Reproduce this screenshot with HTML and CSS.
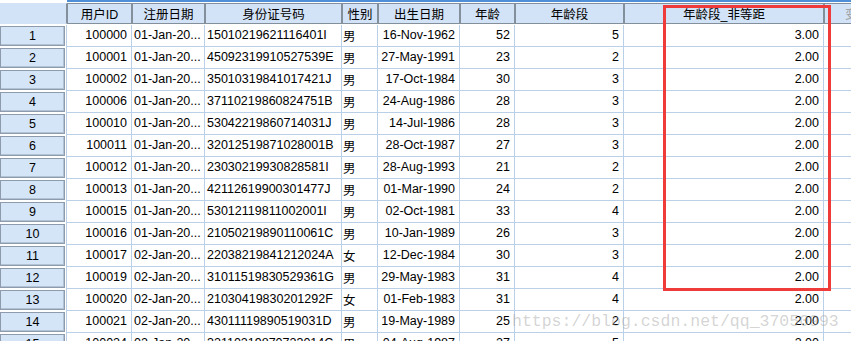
FILE: index.html
```html
<!DOCTYPE html>
<html lang="zh-CN">
<head>
  <meta charset="UTF-8">
  <title>数据视图</title>
  <link rel="stylesheet" href="styles.css">
</head>
<body>
  <div class="sheet">
    <table class="grid">
      <colgroup>
        <col class="w-rowhead">
        <col class="w-id">
        <col class="w-reg">
        <col class="w-card">
        <col class="w-sex">
        <col class="w-birth">
        <col class="w-age">
        <col class="w-band">
        <col class="w-band2">
        <col class="w-empty">
      </colgroup>
      <thead>
        <tr>
          <th class="corner"><div class="hc"></div></th>
          <th><div class="hc">用户ID</div></th>
          <th><div class="hc">注册日期</div></th>
          <th><div class="hc">身份证号码</div></th>
          <th><div class="hc">性别</div></th>
          <th><div class="hc">出生日期</div></th>
          <th><div class="hc">年龄</div></th>
          <th><div class="hc">年龄段</div></th>
          <th><div class="hc">年龄段_非等距</div></th>
          <th><div class="hc empty">变量</div></th>
        </tr>
      </thead>
      <tbody>
        <tr>
          <td class="rowhead"><div class="rh">1</div></td>
          <td class="num">100000</td><td class="txt">01-Jan-20...</td><td class="txt">15010219621116401I</td><td class="txt cjk">男</td>
          <td class="num">16-Nov-1962</td><td class="num">52</td><td class="num">5</td><td class="num">3.00</td><td></td>
        </tr>
        <tr>
          <td class="rowhead"><div class="rh">2</div></td>
          <td class="num">100001</td><td class="txt">01-Jan-20...</td><td class="txt">45092319910527539E</td><td class="txt cjk">男</td>
          <td class="num">27-May-1991</td><td class="num">23</td><td class="num">2</td><td class="num">2.00</td><td></td>
        </tr>
        <tr>
          <td class="rowhead"><div class="rh">3</div></td>
          <td class="num">100002</td><td class="txt">01-Jan-20...</td><td class="txt">35010319841017421J</td><td class="txt cjk">男</td>
          <td class="num">17-Oct-1984</td><td class="num">30</td><td class="num">3</td><td class="num">2.00</td><td></td>
        </tr>
        <tr>
          <td class="rowhead"><div class="rh">4</div></td>
          <td class="num">100006</td><td class="txt">01-Jan-20...</td><td class="txt">37110219860824751B</td><td class="txt cjk">男</td>
          <td class="num">24-Aug-1986</td><td class="num">28</td><td class="num">3</td><td class="num">2.00</td><td></td>
        </tr>
        <tr>
          <td class="rowhead"><div class="rh">5</div></td>
          <td class="num">100010</td><td class="txt">01-Jan-20...</td><td class="txt">53042219860714031J</td><td class="txt cjk">男</td>
          <td class="num">14-Jul-1986</td><td class="num">28</td><td class="num">3</td><td class="num">2.00</td><td></td>
        </tr>
        <tr>
          <td class="rowhead"><div class="rh">6</div></td>
          <td class="num">100011</td><td class="txt">01-Jan-20...</td><td class="txt">32012519871028001B</td><td class="txt cjk">男</td>
          <td class="num">28-Oct-1987</td><td class="num">27</td><td class="num">3</td><td class="num">2.00</td><td></td>
        </tr>
        <tr>
          <td class="rowhead"><div class="rh">7</div></td>
          <td class="num">100012</td><td class="txt">01-Jan-20...</td><td class="txt">23030219930828581I</td><td class="txt cjk">男</td>
          <td class="num">28-Aug-1993</td><td class="num">21</td><td class="num">2</td><td class="num">2.00</td><td></td>
        </tr>
        <tr>
          <td class="rowhead"><div class="rh">8</div></td>
          <td class="num">100013</td><td class="txt">01-Jan-20...</td><td class="txt">42112619900301477J</td><td class="txt cjk">男</td>
          <td class="num">01-Mar-1990</td><td class="num">24</td><td class="num">2</td><td class="num">2.00</td><td></td>
        </tr>
        <tr>
          <td class="rowhead"><div class="rh">9</div></td>
          <td class="num">100015</td><td class="txt">01-Jan-20...</td><td class="txt">53012119811002001I</td><td class="txt cjk">男</td>
          <td class="num">02-Oct-1981</td><td class="num">33</td><td class="num">4</td><td class="num">2.00</td><td></td>
        </tr>
        <tr>
          <td class="rowhead"><div class="rh">10</div></td>
          <td class="num">100016</td><td class="txt">01-Jan-20...</td><td class="txt">21050219890110061C</td><td class="txt cjk">男</td>
          <td class="num">10-Jan-1989</td><td class="num">26</td><td class="num">3</td><td class="num">2.00</td><td></td>
        </tr>
        <tr>
          <td class="rowhead"><div class="rh">11</div></td>
          <td class="num">100017</td><td class="txt">02-Jan-20...</td><td class="txt">22038219841212024A</td><td class="txt cjk">女</td>
          <td class="num">12-Dec-1984</td><td class="num">30</td><td class="num">3</td><td class="num">2.00</td><td></td>
        </tr>
        <tr>
          <td class="rowhead"><div class="rh">12</div></td>
          <td class="num">100019</td><td class="txt">02-Jan-20...</td><td class="txt">31011519830529361G</td><td class="txt cjk">男</td>
          <td class="num">29-May-1983</td><td class="num">31</td><td class="num">4</td><td class="num">2.00</td><td></td>
        </tr>
        <tr>
          <td class="rowhead"><div class="rh">13</div></td>
          <td class="num">100020</td><td class="txt">02-Jan-20...</td><td class="txt">21030419830201292F</td><td class="txt cjk">女</td>
          <td class="num">01-Feb-1983</td><td class="num">31</td><td class="num">4</td><td class="num">2.00</td><td></td>
        </tr>
        <tr>
          <td class="rowhead"><div class="rh">14</div></td>
          <td class="num">100021</td><td class="txt">02-Jan-20...</td><td class="txt">43011119890519031D</td><td class="txt cjk">男</td>
          <td class="num">19-May-1989</td><td class="num">25</td><td class="num">2</td><td class="num">2.00</td><td></td>
        </tr>
        <tr>
          <td class="rowhead"><div class="rh">15</div></td>
          <td class="num">100024</td><td class="txt">02-Jan-20...</td><td class="txt">32110219870723014C</td><td class="txt cjk">男</td>
          <td class="num">04-Aug-1987</td><td class="num">27</td><td class="num">5</td><td class="num">2.00</td><td></td>
        </tr>
      </tbody>
    </table>

    <!-- 标注框和水印覆盖在表格上 -->
    <div class="highlight"></div>
    <div class="watermark">https://blog.csdn.net/qq_37050993</div>
  </div>
</body>
</html>
```

FILE: styles.css
```css
body {
  margin: 0;
  background-color: #fff;
  font-family: "Liberation Sans", "Noto Sans CJK SC", sans-serif;
  font-size: 12.5px;
  color: #000;
  overflow: hidden;
}

.sheet {
  position: relative;
  width: 891px;
}

.grid {
  border-collapse: separate;
  border-spacing: 0;
  table-layout: fixed;
  width: 891px;
}

.w-rowhead { width: 67px; }
.w-id { width: 65px; }
.w-reg { width: 73px; }
.w-card { width: 137px; }
.w-sex { width: 36px; }
.w-birth { width: 82px; }
.w-age { width: 55px; }
.w-band { width: 109px; }
.w-band2 { width: 200px; }
.w-empty { width: 67px; }

.grid th {
  padding: 1px 0;
  border-top: 2px solid #4f8fd8;
  font-weight: normal;
}

.grid th.corner {
  border-top-color: #fff;
}

.hc {
  height: 17px;
  padding-top: 2px;
  line-height: 19px;
  background-color: #d3e3f7;
  border: 1px solid #848f9c;
  text-align: center;
  white-space: nowrap;
  overflow: hidden;
}

.corner .hc {
  border-color: #d3e3f7 #848f9c #d3e3f7 #d3e3f7;
}

.hc.empty {
  color: #9a9a9a;
}

.grid tbody tr {
  height: 22px;
}

.grid td {
  padding: 0;
  height: 21px;
  line-height: 21px;
  border-right: 1px solid #bad0e9;
  border-bottom: 1px solid #bad0e9;
  white-space: nowrap;
  overflow: hidden;
}

.grid td.rowhead {
  padding: 1px 1px 1px 0;
  height: 20px;
  border-bottom: none;
}

.rh {
  height: 18px;
  line-height: 18px;
  background-color: #d5e5f8;
  border: 1px solid #8e9bac;
  box-shadow: inset -1px -1px 0 #b3c3d6;
  text-align: center;
}

.num {
  text-align: right;
  padding-right: 4px !important;
}

.txt {
  text-align: left;
  padding-left: 2px !important;
}

.cjk {
  font-family: "Noto Sans CJK SC", sans-serif;
  padding-left: 1px !important;
}

.highlight {
  position: absolute;
  left: 663px;
  top: 5px;
  width: 162px;
  height: 280px;
  border: 3px solid #f03b3b;
}

.watermark {
  position: absolute;
  left: 512px;
  top: 312px;
  font-family: "Liberation Mono", monospace;
  font-size: 16.5px;
  line-height: 20px;
  color: rgba(160, 160, 160, 0.45);
  white-space: nowrap;
}
```
